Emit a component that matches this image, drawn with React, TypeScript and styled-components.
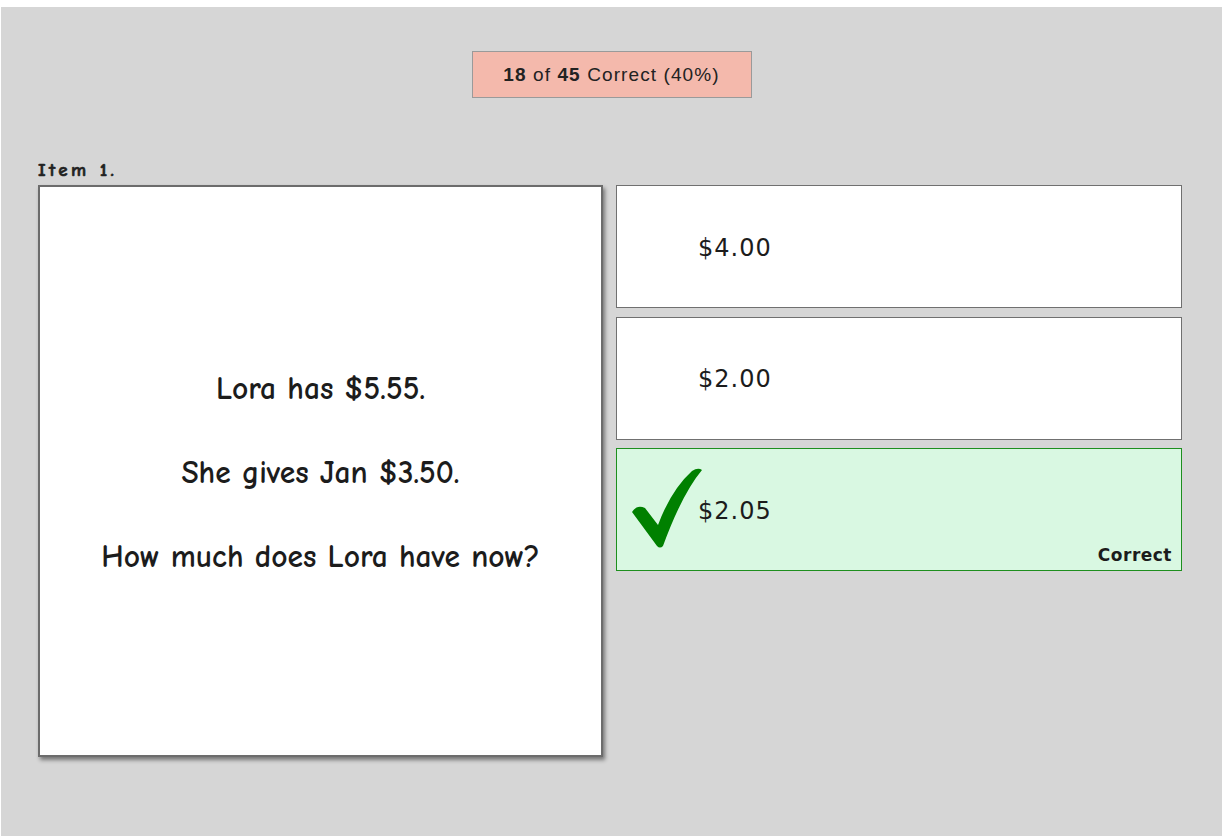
import React from "react";
import styled, { createGlobalStyle } from "styled-components";

const GlobalStyle = createGlobalStyle`
  html, body {
    margin: 0;
    padding: 0;
    background: #ffffff;
  }
`;

const comic = `"Comic Sans MS", "Comic Neue", "DejaVu Sans", sans-serif`;
const lucida = `"Lucida Grande", "DejaVu Sans", "Liberation Sans", sans-serif`;

const Stage = styled.div`
  margin: 7px 3px 0 1px;
  min-height: 829px;
  box-sizing: border-box;
  background: #d6d6d6;
  padding-top: 44px;
`;

const ScoreBox = styled.div`
  width: 280px;
  height: 47px;
  box-sizing: border-box;
  margin: 0 auto;
  display: flex;
  align-items: center;
  justify-content: center;
  background: #f4b9ac;
  border: 1px solid #9a9a9a;
  font-family: "Liberation Sans", Arial, sans-serif;
  font-size: 19px;
  letter-spacing: 1.1px;
  color: #222;

  b {
    font-weight: bold;
  }
`;

const ItemSection = styled.section`
  margin-top: 61px;
  padding-left: 37px;
`;

const ItemLabel = styled.div`
  font-family: ${comic};
  font-weight: 900;
  font-size: 19px;
  letter-spacing: 3.4px;
  -webkit-text-stroke: 0.6px #222;
  color: #222;
  height: 26px;
  line-height: 22px;
`;

const ItemRow = styled.div`
  display: grid;
  grid-template-columns: 565px 566px;
  column-gap: 13px;
  align-items: start;
`;

const QuestionCard = styled.div`
  height: 572px;
  box-sizing: border-box;
  background: #fff;
  border: 2px solid #6c6c6c;
  box-shadow: 2px 3px 4px rgba(0, 0, 0, 0.45);
  display: flex;
  flex-direction: column;
  justify-content: center;
  align-items: center;
  padding-top: 4px;
`;

const QuestionLine = styled.div`
  font-family: ${comic};
  font-weight: bold;
  font-size: 31.5px;
  line-height: 84px;
  color: #1c1c1c;
`;

const Answers = styled.div`
  display: flex;
  flex-direction: column;
  gap: 8.5px;
`;

const AnswerCard = styled.div<{ $correct?: boolean }>`
  position: relative;
  height: 123px;
  box-sizing: border-box;
  display: flex;
  align-items: center;
  padding-left: 81px;
  padding-top: 2px;
  background: ${(p) => (p.$correct ? "#d9f8e2" : "#ffffff")};
  border: 1px solid ${(p) => (p.$correct ? "#1e8f1e" : "#707070")};
  font-family: ${lucida};
  font-size: 24px;
  letter-spacing: 1px;
  color: #1c1c1c;
`;

const Check = styled.svg`
  position: absolute;
  left: 15px;
  top: 19px;
  width: 70px;
  height: 81px;
`;

const Verdict = styled.span`
  position: absolute;
  right: 9px;
  bottom: 5px;
  font-family: ${lucida};
  font-weight: bold;
  font-size: 17px;
  letter-spacing: 0.5px;
  color: #1c1c1c;
`;

const CheckMark = () => (
  <Check viewBox="0 0 70 81">
    <path
      fill="#008000"
      d="M0,44 Q5,36 13,40 L26,57 Q39,22 60,3 Q66,-1 70,2 Q50,26 31,78 Q28,81 25,78 Z"
    />
  </Check>
);

const answers = [
  { text: "$4.00", correct: false },
  { text: "$2.00", correct: false },
  { text: "$2.05", correct: true },
];

export default function App() {
  return (
    <>
      <GlobalStyle />
      <Stage>
        <ScoreBox>
          <span>
            <b>18</b> of <b>45</b> Correct (40%)
          </span>
        </ScoreBox>
        <ItemSection>
          <ItemLabel>Item 1.</ItemLabel>
          <ItemRow>
            <QuestionCard>
              <QuestionLine>Lora has $5.55.</QuestionLine>
              <QuestionLine>She gives Jan $3.50.</QuestionLine>
              <QuestionLine>How much does Lora have now?</QuestionLine>
            </QuestionCard>
            <Answers>
              {answers.map((a) => (
                <AnswerCard key={a.text} $correct={a.correct}>
                  {a.correct && <CheckMark />}
                  {a.text}
                  {a.correct && <Verdict>Correct</Verdict>}
                </AnswerCard>
              ))}
            </Answers>
          </ItemRow>
        </ItemSection>
      </Stage>
    </>
  );
}
